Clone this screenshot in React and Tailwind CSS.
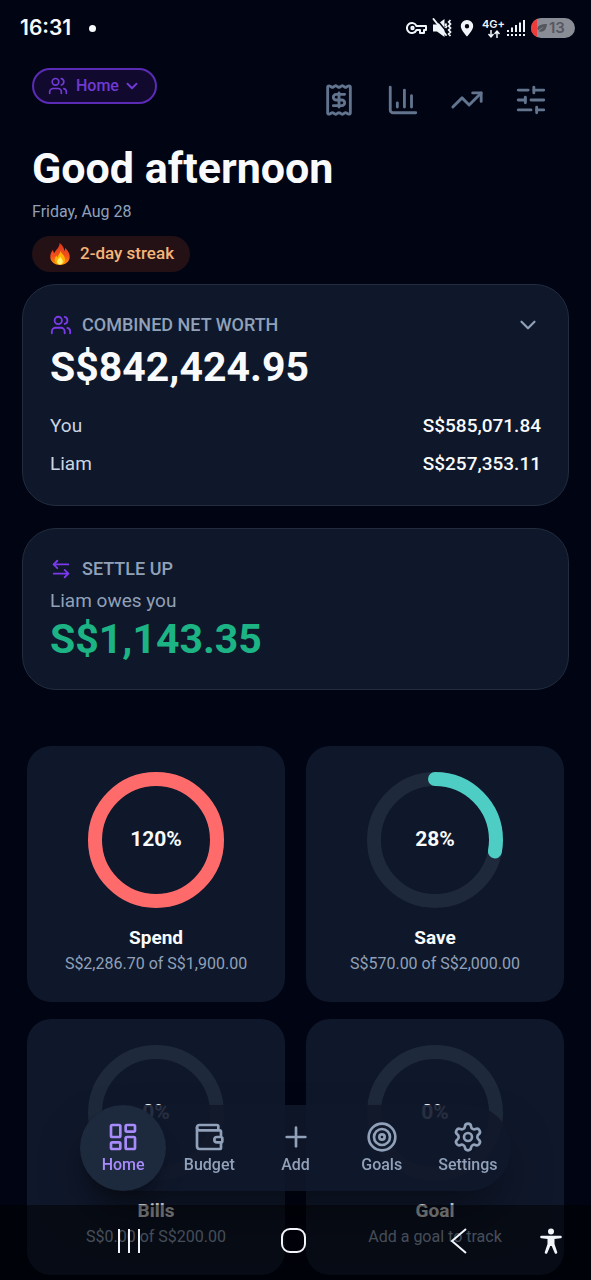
import {
  ArrowLeftRight,
  ChartColumn,
  ChevronDown,
  LayoutDashboard,
  Plus,
  Settings,
  SlidersHorizontal,
  Target,
  TrendingUp,
  Users,
  Wallet,
} from "lucide-react";

const RINGS = [
  {
    name: "Spend",
    percent: 120,
    color: "#ff6b6b",
    detail: "S$2,286.70 of S$1,900.00",
  },
  {
    name: "Save",
    percent: 28,
    color: "#4ecdc4",
    detail: "S$570.00 of S$2,000.00",
  },
  { name: "Bills", percent: 0, color: "#ffe66d", detail: "S$0.00 of S$200.00" },
  { name: "Goal", percent: 0, color: "#a78bfa", detail: "Add a goal to track" },
];

const MEMBERS = [
  { name: "You", amount: "S$585,071.84" },
  { name: "Liam", amount: "S$257,353.11" },
];

const SHORTCUTS = [
  { label: "Receipts", Icon: ReceiptIcon },
  { label: "Reports", Icon: ChartColumn },
  { label: "Trends", Icon: TrendingUp },
  { label: "Customise", Icon: SlidersHorizontal },
];

const TABS = [
  { label: "Home", Icon: LayoutDashboard, active: true },
  { label: "Budget", Icon: Wallet },
  { label: "Add", Icon: Plus },
  { label: "Goals", Icon: Target },
  { label: "Settings", Icon: Settings },
];

export default function App() {
  return (
    <div className="min-h-screen bg-[#010413] font-[Roboto,sans-serif] text-slate-50">
      <StatusBar />

      <header className="pt-3 pl-8 pr-7">
        <div className="flex items-start justify-between">
          <button className="flex items-center gap-2 h-9 px-3.5 rounded-full border-2 border-[#5b2bb5] bg-[#120a2e] text-[#7039d4] text-base font-medium">
            <Users className="w-5 h-5" />
            <span className="flex items-center gap-1">
              Home
              <ChevronDown className="w-[18px] h-[18px]" strokeWidth={2.5} />
            </span>
          </button>
          <div className="flex text-slate-500">
            {SHORTCUTS.map(({ label, Icon }) => (
              <button key={label} aria-label={label} className="p-[15px]">
                <Icon className="w-[34px] h-[34px]" />
              </button>
            ))}
          </div>
        </div>
        <h1 className="mt-2 text-[43px] leading-14 font-bold">
          Good afternoon
        </h1>
        <p className="mt-1 text-base leading-6 text-slate-400">
          Friday, Aug 28
        </p>
        <div className="mt-3 w-fit flex items-center gap-2 h-9 px-4 rounded-full bg-[#231116] text-[17px] font-medium text-[#f5b478]">
          <FlameIcon className="w-6 h-6" />
          2-day streak
        </div>
      </header>

      <main className="pt-3 pb-1">
        <div className="flex flex-col gap-[22px] px-[22px]">
          <section className="rounded-[34px] border border-[#222c3d] bg-[#0f172a] px-[27px] pt-[26px] pb-[22px]">
            <div className="flex items-center justify-between">
              <CardTitle Icon={Users}>COMBINED NET WORTH</CardTitle>
              <button aria-label="Show details" className="text-slate-400">
                <ChevronDown className="w-[26px] h-[26px]" />
              </button>
            </div>
            <p className="text-[41px] leading-14 font-bold">S$842,424.95</p>
            <dl className="mt-3">
              {MEMBERS.map((m) => (
                <div
                  key={m.name}
                  className="flex items-center justify-between h-[38px] text-[19px]"
                >
                  <dt className="text-slate-300">{m.name}</dt>
                  <dd className="font-medium">{m.amount}</dd>
                </div>
              ))}
            </dl>
          </section>

          <section className="rounded-[34px] border border-[#222c3d] bg-[#0f172a] px-[27px] pt-[26px] pb-6">
            <CardTitle Icon={ArrowLeftRight}>SETTLE UP</CardTitle>
            <p className="mt-1.5 text-[19px] leading-6 text-slate-400">
              Liam owes you
            </p>
            <p className="text-[41px] leading-13 font-bold text-[#1cb484]">
              S$1,143.35
            </p>
          </section>
        </div>

        <div className="mt-14 grid grid-cols-2 gap-x-[21px] gap-y-[17px] px-[27px]">
          {RINGS.map((ring) => (
            <RingCard key={ring.name} {...ring} />
          ))}
        </div>
      </main>

      {/* Floating tab bar */}
      <nav className="fixed bottom-[89px] inset-x-20 flex rounded-full bg-[#0f172a]/90 shadow-2xl shadow-black/50">
        {TABS.map(({ label, Icon, active }) => (
          <a
            key={label}
            href="#"
            className={`flex-1 h-[86px] flex flex-col items-center justify-center gap-0.5 rounded-full text-base font-medium ${
              active
                ? "bg-slate-800 text-[#a78bfa] shadow-xl shadow-black/20"
                : "text-slate-400"
            }`}
          >
            <Icon className="w-8 h-8" />
            <span className="leading-5">{label}</span>
          </a>
        ))}
      </nav>

      <SystemBar />
    </div>
  );
}

function CardTitle({ Icon, children }) {
  return (
    <h2 className="flex items-center gap-2.5 text-lg leading-7 font-medium text-slate-400">
      <Icon className="w-[22px] h-[22px] text-[#7c3aed]" />
      {children}
    </h2>
  );
}

function RingCard({ name, percent, color, detail }) {
  const shown = Math.min(percent, 100);
  return (
    <section className="flex flex-col items-center rounded-3xl bg-[#0f172a] pt-[26px] pb-[26px]">
      <div className="grid place-items-center">
        <svg
          viewBox="0 0 136 136"
          className="w-34 h-34 -rotate-90 col-start-1 row-start-1"
          fill="none"
          strokeWidth="14"
        >
          <circle cx="68" cy="68" r="61" stroke="#1e293b" />
          {shown > 0 && (
            <circle
              cx="68"
              cy="68"
              r="61"
              stroke={color}
              strokeLinecap="round"
              pathLength="100"
              strokeDasharray={`${shown} 100`}
            />
          )}
        </svg>
        <span className="col-start-1 row-start-1 text-[21px] font-bold">
          {percent}%
        </span>
      </div>
      <h3 className="mt-4 text-[19px] leading-7 font-bold">{name}</h3>
      <p className="text-base leading-6 text-slate-400">{detail}</p>
    </section>
  );
}

function StatusBar() {
  return (
    <div className="flex items-center justify-between h-14 pl-5 pr-4 font-[Inter,sans-serif]">
      <div className="flex items-center gap-[18px] text-[21px] font-semibold">
        16:31
        <span className="w-[7px] h-[7px] rounded-full bg-slate-50" />
      </div>
      <div className="flex items-center gap-1 text-slate-100">
        {/* VPN key */}
        <svg
          viewBox="0 0 22 22"
          className="w-[22px] h-[22px]"
          fill="none"
          stroke="currentColor"
          strokeWidth="2"
          strokeLinejoin="round"
        >
          <path d="M10.5 9H20v4h-2v3h-4v-3h-3.500A5 5 0 1 1 10.500 9Z" />
          <circle cx="6.500" cy="11" r="1.200" />
        </svg>
        {/* Muted, vibrate on */}
        <svg viewBox="0 0 20 22" className="w-5 h-[22px] mr-1" fill="none">
          <path d="M1 7.500h4L12.500 2v18L5 14.500H1Z" fill="currentColor" />
          <path d="M3.500 1 15 15" stroke="#010413" strokeWidth="1.500" />
          <path
            d="M1.500 2 14 18"
            stroke="currentColor"
            strokeWidth="2"
            strokeLinecap="round"
          />
          <path
            d="m18.500 3-1.800 2 1.800 2-1.800 2 1.800 2-1.800 2 1.800 2-1.800 2 1.800 2M14.500 6.500l-1 1.500 1 1.500-1 1.500"
            stroke="currentColor"
            strokeWidth="1.800"
          />
        </svg>
        <svg viewBox="0 0 14 18" className="w-3.5 h-[18px]">
          <path
            fillRule="evenodd"
            fill="currentColor"
            d="M7 1a6.200 6.200 0 0 1 6.200 6.200C13.200 11 7 17.500 7 17.500S.8 11 .8 7.200A6.200 6.200 0 0 1 7 1Zm0 4a2.200 2.200 0 1 0 0 4.400A2.200 2.200 0 0 0 7 5Z"
          />
        </svg>
        <div className="flex flex-col items-center ml-1">
          <span className="text-[11px] leading-3 font-semibold">4G+</span>
          <svg
            viewBox="0 0 14 8"
            className="w-3.5 h-2"
            fill="none"
            stroke="currentColor"
            strokeWidth="1.500"
          >
            <path d="M4 0v6.500M1.500 4 4 6.800 6.500 4M10 8V1.500M7.500 4 10 1.200 12.500 4" />
          </svg>
        </div>
        {/* Signal */}
        <svg
          viewBox="0 0 18 18"
          className="w-[18px] h-[18px] -ml-0.5"
          fill="currentColor"
        >
          <path d="M0 15h2v2H0zM4 15h2v2H4zM8 15h2v2H8zM12 15h2v2h-2zM16 15h2v2h-2zM0 11h2v2H0zM4 8.500h2V13H4zM8 6h2v7H8zM12 3.500h2V13h-2zM16 1h2v12h-2z" />
        </svg>
        {/* Battery */}
        <div className="ml-0.5 flex items-center w-11 h-5 rounded-full overflow-hidden bg-[#8b8d96] text-[#55575f]">
          <span className="w-1.5 h-full bg-[#ee3b3b]" />
          <svg viewBox="0 0 10 8" className="w-2.5 h-2" fill="currentColor">
            <path d="M10 0C4 0 .5 1.500.5 4.500c0 .8.300 1.500.8 2C3 4.500 5 3.500 7 3 5 4.200 3.200 5.500 2 7.500 6.500 8.500 9.500 6 10 0Z" />
          </svg>
          <span className="ml-0.5 text-[15px] font-semibold">13</span>
        </div>
      </div>
    </div>
  );
}

function SystemBar() {
  return (
    <div className="fixed bottom-0 inset-x-0 h-[75px] pr-1 pb-1 bg-black/50 text-slate-100">
      <div className="grid grid-cols-[1fr_72px_1fr] items-center h-full">
        <button aria-label="Recent apps" className="justify-self-center">
          <svg
            viewBox="0 0 24 24"
            className="w-6 h-6"
            fill="none"
            stroke="currentColor"
            strokeWidth="2"
          >
            <path d="M2 0v24M12 0v24M22 0v24" />
          </svg>
        </button>
        <button aria-label="Home screen" className="justify-self-center">
          <svg
            viewBox="0 0 28 28"
            className="w-7 h-7"
            fill="none"
            stroke="currentColor"
            strokeWidth="2"
          >
            <rect x="2" y="2" width="23" height="23" rx="8" />
          </svg>
        </button>
        <div className="flex items-center justify-between pl-[120px] pr-6">
          <button aria-label="Back">
            <svg
              viewBox="0 0 18 26"
              className="w-[18px] h-[26px]"
              fill="none"
              stroke="currentColor"
              strokeWidth="2"
            >
              <path d="M16 1 2 13l14 12" />
            </svg>
          </button>
          <button aria-label="Accessibility">
            <svg viewBox="0 0 24 28" className="w-6 h-7" fill="currentColor">
              <circle cx="12" cy="4.500" r="3" />
              <path d="M2.500 8.700h19a1.200 1.200 0 0 1 0 2.600L15.500 12v5l2.700 8a1.200 1.200 0 0 1-2.500.9L12.700 19h-1.400l-3 6.900a1.200 1.200 0 0 1-2.500-.9l2.700-8v-5l-6-.7a1.200 1.200 0 0 1 0-2.600Z" />
            </svg>
          </button>
        </div>
      </div>
    </div>
  );
}

function ReceiptIcon({ className }) {
  return (
    <svg
      viewBox="0 0 24 24"
      className={className}
      fill="none"
      stroke="currentColor"
      strokeWidth="2"
      strokeLinecap="round"
      strokeLinejoin="round"
    >
      <path d="M12 17V7" />
      <path d="M16 8h-6a2 2 0 0 0 0 4h4a2 2 0 0 1 0 4H8" />
      <path d="M4 3a1 1 0 0 1 1-1 1.300 1.300 0 0 1 .7.200l.933.600a1.300 1.300 0 0 0 1.400 0l.934-.6a1.300 1.300 0 0 1 1.400 0l.933.600a1.300 1.300 0 0 0 1.400 0l.933-.6a1.300 1.300 0 0 1 1.400 0l.934.600a1.300 1.300 0 0 0 1.400 0l.933-.6A1.300 1.300 0 0 1 19 2a1 1 0 0 1 1 1v18a1 1 0 0 1-1 1 1.300 1.300 0 0 1-.7-.2l-.933-.6a1.300 1.300 0 0 0-1.400 0l-.934.600a1.300 1.300 0 0 1-1.400 0l-.933-.6a1.300 1.300 0 0 0-1.400 0l-.933.600a1.300 1.300 0 0 1-1.400 0l-.934-.6a1.300 1.300 0 0 0-1.400 0l-.933.600a1.300 1.300 0 0 1-.7.200 1 1 0 0 1-1-1z" />
    </svg>
  );
}

function FlameIcon({ className }) {
  return (
    <svg viewBox="0 0 24 24" className={className}>
      <defs>
        <linearGradient id="flame" x1="0" y1="0" x2="0" y2="1">
          <stop offset="0" stopColor="#d9341c" />
          <stop offset="0.600" stopColor="#f4511e" />
          <stop offset="1" stopColor="#ff9800" />
        </linearGradient>
      </defs>
      <path
        fill="url(#flame)"
        d="M11.500 1c3 2 4.800 5 4.700 8 .8-.7 1-2 .8-3.200 3 2.700 4.700 5.600 4.700 9 0 4.700-4 8.200-9.500 8.200S2.300 19.500 2.300 15c0-3 1.200-5.500 2.700-7.200.1 1.600.5 2.700 1.500 3.200C7.500 8 11.700 6 11.500 1Z"
      />
      <path
        fill="#ffb300"
        d="M12.500 8.500c.3 3 4.500 4.500 4.500 9 0 3-2 5-5 5s-5.200-2-5.200-4.800c0-2 .8-3.300 1.700-4.200.2 1 .6 1.700 1.300 2 0-3 2.900-4 2.700-7Z"
      />
      <path
        fill="#fff176"
        d="M12.300 14.500c.3 1.700 2.500 2.600 2.500 5 0 1.800-1.200 3-2.900 3s-2.900-1.200-2.900-2.800c0-2.200 2.500-3 3.300-5.200Z"
      />
    </svg>
  );
}
